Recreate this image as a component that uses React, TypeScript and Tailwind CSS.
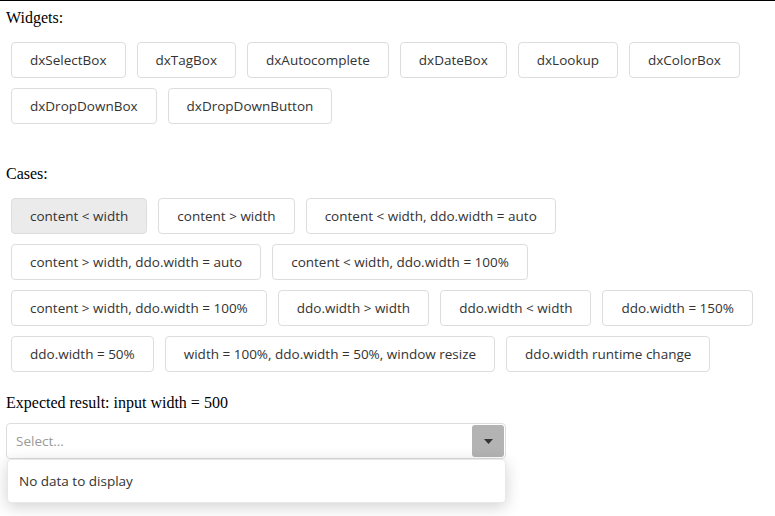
import React from "react";

const widgets = ["dxSelectBox", "dxTagBox", "dxAutocomplete", "dxDateBox", "dxLookup", "dxColorBox", "dxDropDownBox", "dxDropDownButton"];
const cases = [
  "content < width",
  "content > width",
  "content < width, ddo.width = auto",
  "content > width, ddo.width = auto",
  "content < width, ddo.width = 100%",
  "content > width, ddo.width = 100%",
  "ddo.width > width",
  "ddo.width < width",
  "ddo.width = 150%",
  "ddo.width = 50%",
  "width = 100%, ddo.width = 50%, window resize",
  "ddo.width runtime change",
];

const sans = "font-['Open_Sans',sans-serif] text-[13.5px]";

function Btn({ label, active }: { label: string; active?: boolean }) {
  return (
    <button
      className={`h-[36px] px-[18px] border border-[#dddddd] rounded-[4px] text-[#333333] leading-[20px] whitespace-nowrap ${sans} ${
        active ? "bg-[#ebebeb]" : "bg-white"
      }`}
    >
      {label}
    </button>
  );
}

export default function App() {
  return (
    <div className="w-[775px] h-[516px] bg-white border-t border-black font-['Liberation_Serif',serif] text-[16px] text-black overflow-hidden">
      <div className="pl-[6px] pt-[8px]">
        <div className="leading-[18px]">Widgets:</div>
        <div className="mt-[15px] ml-[5px] flex flex-wrap gap-x-[11px] gap-y-[10px] w-[760px]">
          {widgets.map((w) => (
            <Btn key={w} label={w} />
          ))}
        </div>
        <div className="mt-[41px] leading-[18px]">Cases:</div>
        <div className="mt-[15px] ml-[5px] flex flex-wrap gap-x-[11px] gap-y-[10px] w-[760px]">
          {cases.map((c, i) => (
            <Btn key={c} label={c} active={i === 0} />
          ))}
        </div>
        <div className="mt-[22px] leading-[18px]">Expected result: input width = 500</div>
        <div className="relative mt-[11px] w-[500px]">
          <div className="h-[36px] border border-[#dddddd] rounded-[4px] flex items-center bg-white">
            <span className={`flex-1 pl-[9px] text-[#999999] ${sans}`}>Select...</span>
            <div className="w-[32px] h-[32px] mr-[1px] rounded-[3px] bg-[#b3b3b3] flex items-center justify-center">
              <svg width="9" height="5" viewBox="0 0 9 5">
                <path d="M0 0 L9 0 L4.5 5 Z" fill="#333333" />
              </svg>
            </div>
          </div>
          <div className="absolute left-[1px] right-0 top-[36px] h-[44px] bg-white rounded-[4px] border border-[#e8e8e8] shadow-[0_4px_16px_rgba(0,0,0,0.18)] flex items-center">
            <span className={`pl-[11px] text-[#333333] ${sans}`}>No data to display</span>
          </div>
        </div>
      </div>
    </div>
  );
}
